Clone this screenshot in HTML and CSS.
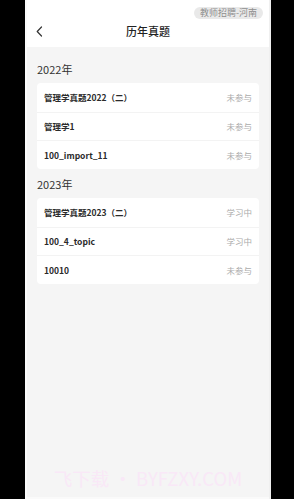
FILE: index.html
```html
<!DOCTYPE html>
<html lang="zh-CN">
<head>
<meta charset="utf-8">
<link rel="stylesheet" href="styles.css">
</head>
<body>
<div class="screen">
  <header class="header">
    <div class="badge-row"><span class="badge">教师招聘-河南</span></div>
    <div class="nav">
      <span class="back">
        <svg width="7" height="11" viewBox="0 0 7 11"><path d="M5.5 1 L1.2 5.5 L5.5 10" fill="none" stroke="#333" stroke-width="1.2" stroke-linecap="round" stroke-linejoin="round"/></svg>
      </span>
      <h1 class="title">历年真题</h1>
      <span class="spacer"></span>
    </div>
  </header>
  <main class="content">
    <h2 class="year first">2022年</h2>
    <ul class="card">
      <li class="row"><span class="name">管理学真题2022（二）</span><span class="status">未参与</span></li>
      <li class="row"><span class="name">管理学1</span><span class="status">未参与</span></li>
      <li class="row"><span class="name">100_import_11</span><span class="status">未参与</span></li>
    </ul>
    <h2 class="year">2023年</h2>
    <ul class="card">
      <li class="row"><span class="name">管理学真题2023（二）</span><span class="status">学习中</span></li>
      <li class="row"><span class="name">100_4_topic</span><span class="status">学习中</span></li>
      <li class="row"><span class="name">10010</span><span class="status">未参与</span></li>
    </ul>
  </main>
  <div class="watermark">飞下载 • BYFZXY.COM</div>
  <div class="bottom-strip"></div>
</div>
</body>
</html>
```
FILE: styles.css
```css
* { box-sizing: border-box; }
html, body {
  margin: 0;
  padding: 0;
  background: #000;
  height: 499px;
  overflow: hidden;
}
body {
  font-family: "Noto Sans CJK SC", "Noto Sans", sans-serif;
}
.screen {
  margin-left: 25px;
  width: 246px;
  height: 499px;
  background: #f5f5f5;
  border-left: 2px solid #fbfbfb;
  border-right: 2px solid #f0f0f0;
  display: flex;
  flex-direction: column;
}
.header {
  background: #fff;
  height: 47px;
  padding-top: 7px;
  display: flex;
  flex-direction: column;
}
.badge-row {
  display: flex;
  justify-content: flex-end;
  padding-right: 6px;
  height: 12px;
}
.badge {
  display: inline-flex;
  align-items: center;
  height: 12px;
  padding: 0 6px;
  border-radius: 6px;
  background: #e9e9e9;
  color: #8e8e8e;
  font-size: 9px;
  line-height: 12px;
}
.nav {
  height: 24px;
  display: grid;
  grid-template-columns: 40px 1fr 40px;
  align-items: center;
}
.back {
  display: flex;
  align-items: center;
  padding-left: 9px;
}
.back svg { display: block; }
.title {
  margin: 0;
  text-align: center;
  font-size: 11px;
  font-weight: 500;
  color: #222;
  line-height: 14px;
}
.content {
  padding: 0 10px;
  display: flex;
  flex-direction: column;
}
.year {
  margin: 0;
  font-size: 11px;
  font-weight: 400;
  color: #333;
  line-height: 14px;
  padding: 8px 0 7px;
}
.year.first { padding-top: 15px; }
.card {
  list-style: none;
  margin: 0;
  padding: 0;
  background: #fff;
  border-radius: 4px;
}
.row {
  height: 28.67px;
  display: flex;
  align-items: center;
  justify-content: space-between;
  padding: 0 7px;
  border-top: 1px solid #f3f3f3;
}
.row:first-child { border-top: none; }
.name {
  font-size: 8.5px;
  font-weight: 600;
  color: #2a2a2a;
}
.status {
  font-size: 8.5px;
  color: #ababab;
}
.watermark {
  margin-top: auto;
  text-align: center;
  font-family: "Noto Sans CJK SC", "Noto Sans", sans-serif;
  font-size: 18.5px;
  line-height: 20px;
  color: #f9e8f7;
  padding-bottom: 9px;
}
.bottom-strip {
  height: 2px;
  background: #fafafa;
}
```
